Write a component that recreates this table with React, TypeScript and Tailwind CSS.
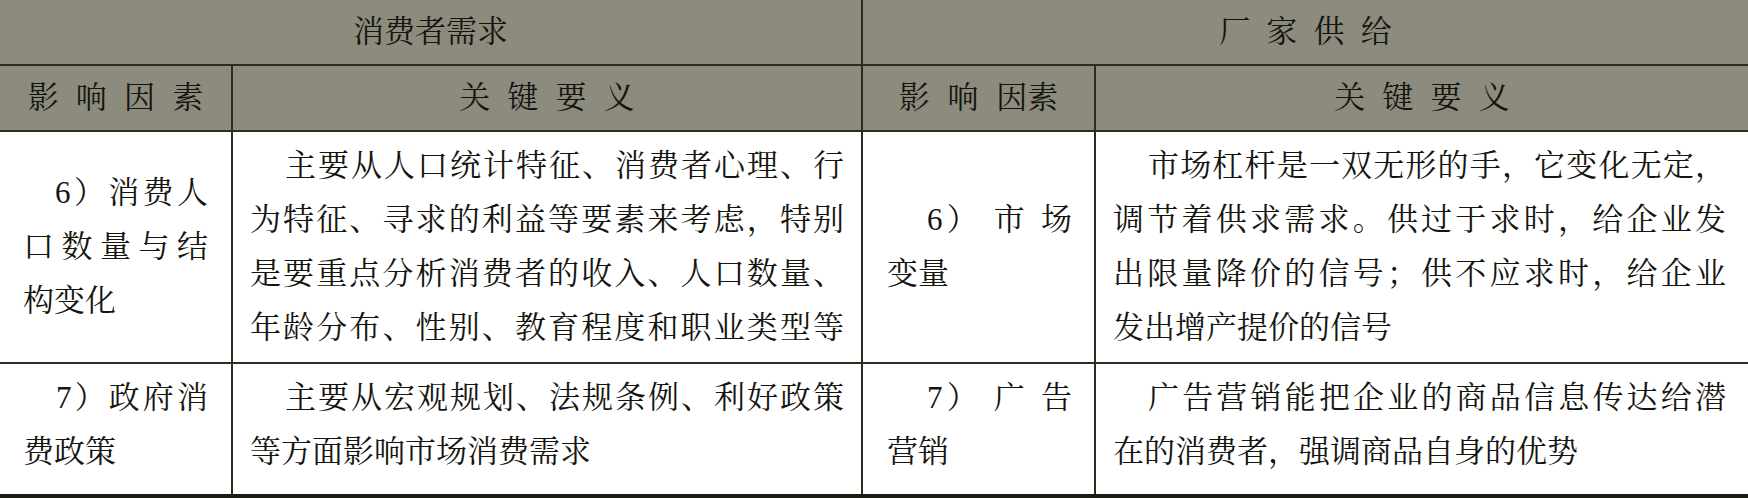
import React from "react";

type Line = { t: string; j?: boolean; ind?: string };
type CellDef = { lines: Line[] };

const BORDER = "border-[#2c2c20]";

function Lines({ lines }: { lines: Line[] }) {
  return (
    <>
      {lines.map((l, i) => (
        <div
          key={i}
          className={[
            l.j ? "text-justify [text-align-last:justify]" : "text-left",
            l.ind ?? "",
          ].join(" ")}
        >
          {l.t}
        </div>
      ))}
    </>
  );
}

function BodyRow({
  cells,
  rowClass,
  cellPad,
}: {
  cells: CellDef[];
  rowClass: string;
  cellPad: string;
}) {
  return (
    <div className={`flex ${rowClass}`}>
      <div className={`w-[231px] shrink-0 flex flex-col justify-center pl-[23px] pr-[23px] ${cellPad}`}>
        <Lines lines={cells[0].lines} />
      </div>
      <div className={`w-[630px] shrink-0 flex flex-col justify-center border-l-2 ${BORDER} pl-[17px] pr-[17px] ${cellPad}`}>
        <Lines lines={cells[1].lines} />
      </div>
      <div className={`w-[233px] shrink-0 flex flex-col justify-center border-l-2 ${BORDER} pl-[24px] pr-[22px] ${cellPad}`}>
        <Lines lines={cells[2].lines} />
      </div>
      <div className={`flex-1 flex flex-col justify-center border-l-2 ${BORDER} pl-[17px] pr-[22px] ${cellPad}`}>
        <Lines lines={cells[3].lines} />
      </div>
    </div>
  );
}

export default function App() {
  const row1: CellDef[] = [
    {
      lines: [
        { t: "6）消费人", j: true, ind: "pl-[32px]" },
        { t: "口数量与结", j: true },
        { t: "构变化" },
      ],
    },
    {
      lines: [
        { t: "主要从人口统计特征、消费者心理、行", j: true, ind: "pl-[35px]" },
        { t: "为特征、寻求的利益等要素来考虑，特别", j: true },
        { t: "是要重点分析消费者的收入、人口数量、", j: true },
        { t: "年龄分布、性别、教育程度和职业类型等", j: true },
      ],
    },
    {
      lines: [
        { t: "6） 市 场", j: true, ind: "pl-[40px]" },
        { t: "变量" },
      ],
    },
    {
      lines: [
        { t: "市场杠杆是一双无形的手，它变化无定，", j: true, ind: "pl-[35px]" },
        { t: "调节着供求需求。供过于求时，给企业发", j: true },
        { t: "出限量降价的信号；供不应求时，给企业", j: true },
        { t: "发出增产提价的信号" },
      ],
    },
  ];

  const row2: CellDef[] = [
    {
      lines: [
        { t: "7）政府消", j: true, ind: "pl-[33px]" },
        { t: "费政策" },
      ],
    },
    {
      lines: [
        { t: "主要从宏观规划、法规条例、利好政策", j: true, ind: "pl-[35px]" },
        { t: "等方面影响市场消费需求" },
      ],
    },
    {
      lines: [
        { t: "7） 广 告", j: true, ind: "pl-[40px]" },
        { t: "营销" },
      ],
    },
    {
      lines: [
        { t: "广告营销能把企业的商品信息传达给潜", j: true, ind: "pl-[35px]" },
        { t: "在的消费者，强调商品自身的优势" },
      ],
    },
  ];

  return (
    <div className="w-[1748px] h-[498px] bg-white text-[#151510] text-[31px] leading-[54px] font-['Liberation_Serif','Noto_Serif_CJK_SC','Noto_Sans_CJK_SC',serif] overflow-hidden">
      {/* header row 1 */}
      <div className={`flex h-[66px] bg-[#8d8b7d] border-b-2 ${BORDER}`}>
        <div className="w-[861px] shrink-0 flex items-center justify-center">
          消费者需求
        </div>
        <div className={`flex-1 flex items-center justify-center border-l-2 ${BORDER} [word-spacing:8.5px]`}>
          厂 家 供 给
        </div>
      </div>
      {/* header row 2 */}
      <div className={`flex h-[66px] bg-[#8d8b7d] border-b-2 ${BORDER}`}>
        <div className="w-[231px] shrink-0 flex items-center justify-center [word-spacing:9.5px]">
          影 响 因 素
        </div>
        <div className={`w-[630px] shrink-0 flex items-center justify-center border-l-2 ${BORDER} [word-spacing:9.5px]`}>
          关 键 要 义
        </div>
        <div className={`w-[233px] shrink-0 flex items-center justify-center border-l-2 ${BORDER} [word-spacing:10px]`}>
          影 响 因素
        </div>
        <div className={`flex-1 flex items-center justify-center border-l-2 ${BORDER} [word-spacing:9.5px]`}>
          关 键 要 义
        </div>
      </div>
      <BodyRow cells={row1} rowClass={`h-[232px] border-b-2 ${BORDER}`} cellPad="" />
      <BodyRow cells={row2} rowClass="h-[134px] border-b-4 border-[#1b1b12]" cellPad="pb-[8px]" />
    </div>
  );
}
